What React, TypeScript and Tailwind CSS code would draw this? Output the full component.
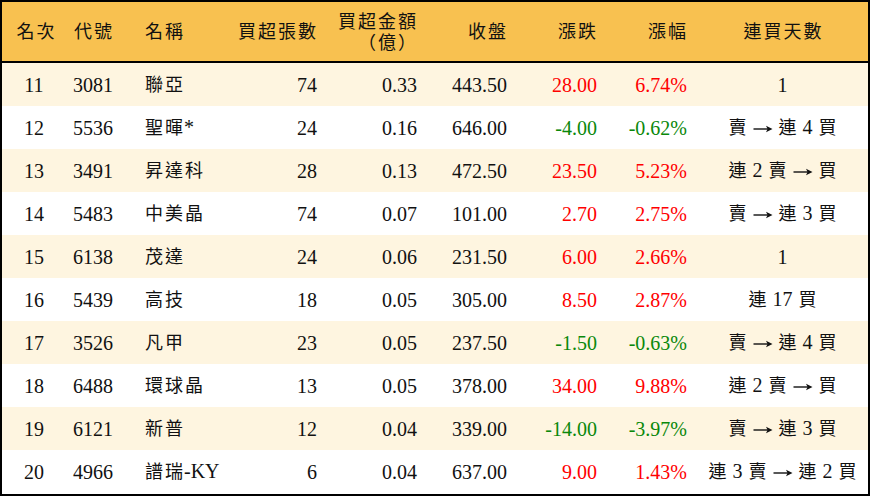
import React from "react";

type Row = {
  rank: string;
  code: string;
  name: string;
  vol: string;
  amt: string;
  close: string;
  chg: string;
  pct: string;
  days: string;
};

const rows: Row[] = [
  { rank: "11", code: "3081", name: "聯亞", vol: "74", amt: "0.33", close: "443.50", chg: "28.00", pct: "6.74%", days: "1" },
  { rank: "12", code: "5536", name: "聖暉*", vol: "24", amt: "0.16", close: "646.00", chg: "-4.00", pct: "-0.62%", days: "賣 → 連 4 買" },
  { rank: "13", code: "3491", name: "昇達科", vol: "28", amt: "0.13", close: "472.50", chg: "23.50", pct: "5.23%", days: "連 2 賣 → 買" },
  { rank: "14", code: "5483", name: "中美晶", vol: "74", amt: "0.07", close: "101.00", chg: "2.70", pct: "2.75%", days: "賣 → 連 3 買" },
  { rank: "15", code: "6138", name: "茂達", vol: "24", amt: "0.06", close: "231.50", chg: "6.00", pct: "2.66%", days: "1" },
  { rank: "16", code: "5439", name: "高技", vol: "18", amt: "0.05", close: "305.00", chg: "8.50", pct: "2.87%", days: "連 17 買" },
  { rank: "17", code: "3526", name: "凡甲", vol: "23", amt: "0.05", close: "237.50", chg: "-1.50", pct: "-0.63%", days: "賣 → 連 4 買" },
  { rank: "18", code: "6488", name: "環球晶", vol: "13", amt: "0.05", close: "378.00", chg: "34.00", pct: "9.88%", days: "連 2 賣 → 買" },
  { rank: "19", code: "6121", name: "新普", vol: "12", amt: "0.04", close: "339.00", chg: "-14.00", pct: "-3.97%", days: "賣 → 連 3 買" },
  { rank: "20", code: "4966", name: "譜瑞-KY", vol: "6", amt: "0.04", close: "637.00", chg: "9.00", pct: "1.43%", days: "連 3 賣 → 連 2 買" },
];

const grid =
  "grid grid-cols-[64px_70px_94px_97px_100px_90px_90px_90px_171px]";

function Arrow() {
  return (
    <svg
      width="20"
      height="10"
      viewBox="0 0 20 10"
      className="inline-block align-middle"
      aria-label="→"
    >
      <line x1="0.5" y1="5" x2="15" y2="5" stroke="#111" strokeWidth="1.4" />
      <path d="M19.5 5 L13 1.8 L14.6 5 L13 8.2 Z" fill="#111" />
    </svg>
  );
}

// Render CJK characters each in a 20px cell with slightly smaller glyphs,
// to mimic the Kai-style typesetting of the source.
function T({ s }: { s: string }) {
  const parts: React.ReactNode[] = [];
  let buf = "";
  const flush = () => {
    if (buf) {
      parts.push(buf);
      buf = "";
    }
  };
  Array.from(s).forEach((ch, i) => {
    if (/[\u3400-\u9fff\uff08\uff09]/.test(ch)) {
      flush();
      parts.push(
        <span key={i} className="inline-block w-[20px] text-center text-[18px]">
          {ch}
        </span>
      );
    } else if (ch === "→") {
      flush();
      parts.push(<Arrow key={i} />);
    } else {
      buf += ch;
    }
  });
  flush();
  return <>{parts}</>;
}

export default function App() {
  return (
    <div
      className="w-[870px] h-[496px] bg-white text-[#111] text-[20px] leading-[20px] border-2 border-black overflow-hidden"
      style={{ fontFamily: '"Liberation Serif", "Noto Sans CJK TC", serif' }}
    >
      <div className={`${grid} h-[61px] bg-[#f8c150] border-b-2 border-black items-center`}>
        <div className="text-center pl-[3px]"><T s="名次" /></div>
        <div className="pl-[7px]"><T s="代號" /></div>
        <div className="pl-[8px]"><T s="名稱" /></div>
        <div className="text-right pr-[10px]"><T s="買超張數" /></div>
        <div className="text-right pr-[10px]">
          <T s="買超金額" />
          <br />
          <T s="（億）" />
        </div>
        <div className="text-right pr-[10px]"><T s="收盤" /></div>
        <div className="text-right pr-[10px]"><T s="漲跌" /></div>
        <div className="text-right pr-[10px]"><T s="漲幅" /></div>
        <div className="text-center"><T s="連買天數" /></div>
      </div>
      {rows.map((r, i) => {
        const neg = r.chg.startsWith("-");
        const color = neg ? "text-[#0a880a]" : "text-[#ff0000]";
        return (
          <div
            key={r.rank}
            className={`${grid} h-[43px] items-center ${i % 2 === 0 ? "bg-[#fef5e0]" : "bg-white"}`}
          >
            <div className="text-center">{r.rank}</div>
            <div className="pl-[7px]">{r.code}</div>
            <div className="pl-[8px] whitespace-nowrap"><T s={r.name} /></div>
            <div className="text-right pr-[10px]">{r.vol}</div>
            <div className="text-right pr-[10px]">{r.amt}</div>
            <div className="text-right pr-[10px]">{r.close}</div>
            <div className={`text-right pr-[10px] ${color}`}>{r.chg}</div>
            <div className={`text-right pr-[10px] ${color}`}>{r.pct}</div>
            <div className="text-center whitespace-nowrap"><T s={r.days} /></div>
          </div>
        );
      })}
    </div>
  );
}
